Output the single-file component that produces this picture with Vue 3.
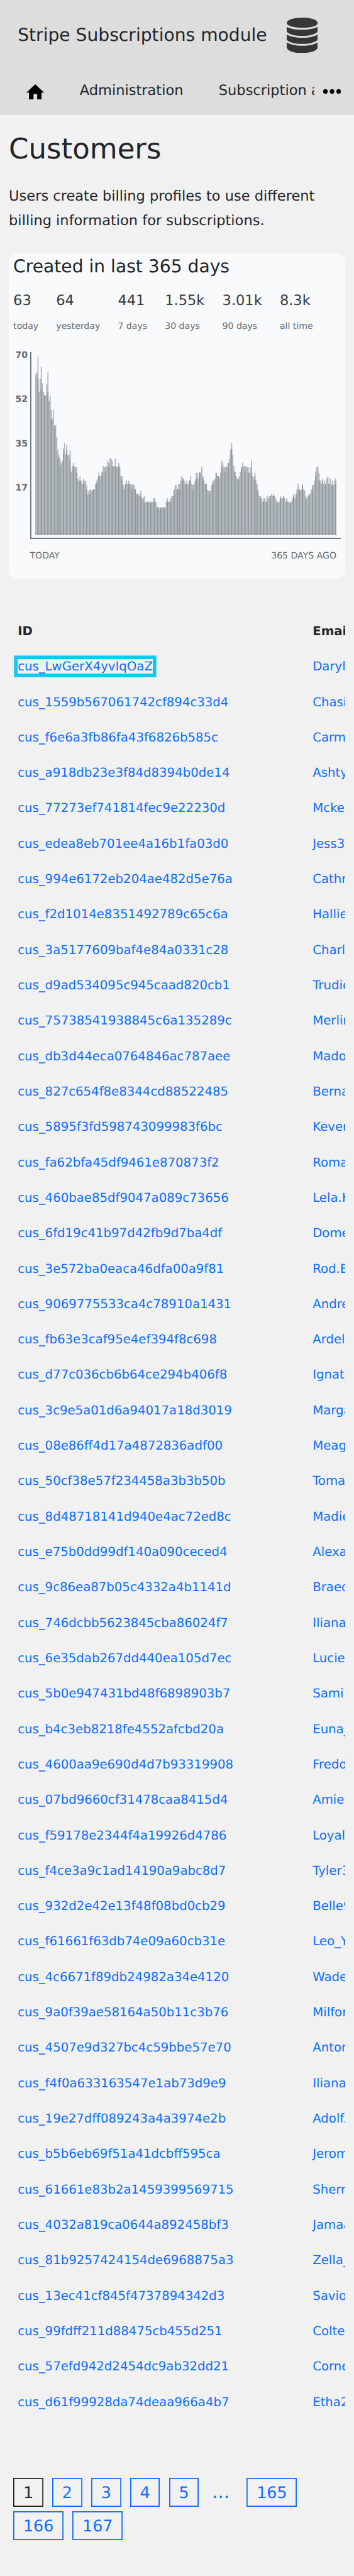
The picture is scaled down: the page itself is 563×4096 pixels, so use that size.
<script setup>
const stats = [
  { value: '63', label: 'today' },
  { value: '64', label: 'yesterday' },
  { value: '441', label: '7 days' },
  { value: '1.55k', label: '30 days' },
  { value: '3.01k', label: '90 days' },
  { value: '8.3k', label: 'all time' },
]

const ticks = ['70', '52', '35', '17']

// Distance of each column's top from the top of the plot; the columns stand on BASE.
const BASE = 165
const tops = [
  20, 18, 4, 36, 24, 13, 28, 36, 39, 39, 29, 18, 44, 39, 52, 60, 52, 66, 66, 77, 88, 93, 96, 100, 98, 87, 82, 92, 84, 93, 93, 88,
  108, 103, 100, 103, 104, 104, 114, 116, 112, 116, 119, 114, 116, 116, 120, 128, 125, 124, 125, 125, 124, 124, 119, 116, 114, 109,
  112, 112, 108, 103, 104, 104, 103, 98, 100, 96, 96, 98, 103, 103, 96, 104, 104, 100, 104, 112, 112, 120, 124, 119, 116, 119, 116,
  119, 119, 120, 119, 120, 124, 128, 128, 130, 128, 125, 132, 132, 130, 136, 135, 135, 135, 136, 135, 136, 135, 132, 135, 136, 140,
  140, 141, 140, 140, 140, 140, 140, 135, 132, 135, 135, 132, 130, 130, 124, 120, 120,
  124, 119, 119, 116, 112, 114, 116, 119, 116, 119, 119, 116, 112, 119, 120, 119, 116, 109, 109, 114, 108, 109, 104, 112, 116, 119,
  119, 124, 125, 125, 125, 120, 116, 116, 114, 109, 112, 112, 114, 109, 98, 100, 104, 104, 103, 104, 100, 96, 88, 82, 93, 103, 108,
  112, 114, 114, 112, 108, 104, 100, 103, 103, 103, 104, 104, 109, 104, 98, 112, 114, 109, 116, 119, 125, 130, 130, 132, 135, 132,
  132, 135, 130, 132, 130, 130, 128, 130, 128, 130, 132, 135, 136, 135, 130, 132, 132, 130, 132, 135, 132, 135, 136, 136, 135, 132,
  128, 132, 128, 124, 119, 124, 125, 124, 120, 124, 125, 130, 132, 130, 128, 128, 124, 120, 120, 116, 108, 104, 103, 109, 116, 119,
  114, 119, 116, 119, 114, 112, 119, 114, 120, 116, 120, 116, 114,
]

// Columns where two neighbouring bars overlap: [column, top].
const overlaps = [
  [2, 24], [5, 34], [8, 39], [11, 36], [14, 61], [17, 68], [20, 96], [22, 103], [25, 92], [28, 88], [31, 98], [34, 104], [37, 109],
  [40, 116], [43, 119], [46, 124], [49, 128], [52, 124], [55, 119], [57, 112], [60, 109], [63, 108], [66, 104], [69, 103], [72, 103],
  [75, 103], [78, 116], [81, 119], [84, 119], [87, 124], [90, 124], [92, 128], [95, 130], [98, 135], [101, 136], [104, 136],
  [107, 132], [110, 140], [113, 141], [116, 141], [119, 135], [122, 135], [125, 125], [128, 124], [130, 124], [133, 114], [136, 119],
  [139, 116], [142, 124], [145, 114], [148, 109], [151, 114], [154, 119], [157, 128], [160, 119], [163, 109], [165, 112], [168, 104],
  [171, 109], [174, 100], [177, 87], [180, 108], [183, 116], [186, 104], [189, 108], [192, 109], [195, 108], [198, 112], [200, 124],
  [203, 132], [206, 135], [209, 135], [212, 132], [215, 130], [218, 136], [221, 132], [224, 130], [227, 135], [230, 136], [233, 130],
  [236, 128], [238, 124], [241, 120], [244, 132], [247, 130], [250, 124], [253, 112], [256, 116], [259, 116], [262, 119], [265, 119],
  [268, 119], [271, 119],
]

const barPath = tops.map((t, i) => `${i ? 'L' : `M0 ${BASE}L`}${i} ${t}H${i + 1}`).join('') + `V${BASE}Z`
const overlapPath = overlaps.map(([x, t]) => `M${x} ${t}h1V${BASE}h-1Z`).join('')
const overlapFoot = overlaps.map(([x]) => `M${x} ${BASE - 1}h1v1h-1Z`).join('')

const customers = [
  ['cus_LwGerX4yvIqOaZ', 'Daryl'],
  ['cus_1559b567061742cf894c33d4', 'Chasi'],
  ['cus_f6e6a3fb86fa43f6826b585c', 'Carm'],
  ['cus_a918db23e3f84d8394b0de14', 'Ashty'],
  ['cus_77273ef741814fec9e22230d', 'Mcke'],
  ['cus_edea8eb701ee4a16b1fa03d0', 'Jess3'],
  ['cus_994e6172eb204ae482d5e76a', 'Cathr'],
  ['cus_f2d1014e8351492789c65c6a', 'Hallie'],
  ['cus_3a5177609baf4e84a0331c28', 'Charl'],
  ['cus_d9ad534095c945caad820cb1', 'Trudie'],
  ['cus_75738541938845c6a135289c', 'Merlin'],
  ['cus_db3d44eca0764846ac787aee', 'Mado'],
  ['cus_827c654f8e8344cd88522485', 'Berna'],
  ['cus_5895f3fd598743099983f6bc', 'Kever'],
  ['cus_fa62bfa45df9461e870873f2', 'Roma'],
  ['cus_460bae85df9047a089c73656', 'Lela.K'],
  ['cus_6fd19c41b97d42fb9d7ba4df', 'Dome'],
  ['cus_3e572ba0eaca46dfa00a9f81', 'Rod.E'],
  ['cus_9069775533ca4c78910a1431', 'Andre'],
  ['cus_fb63e3caf95e4ef394f8c698', 'Ardel'],
  ['cus_d77c036cb6b64ce294b406f8', 'Ignat'],
  ['cus_3c9e5a01d6a94017a18d3019', 'Marga'],
  ['cus_08e86ff4d17a4872836adf00', 'Meag'],
  ['cus_50cf38e57f234458a3b3b50b', 'Toma'],
  ['cus_8d48718141d940e4ac72ed8c', 'Madie'],
  ['cus_e75b0dd99df140a090ceced4', 'Alexa'],
  ['cus_9c86ea87b05c4332a4b1141d', 'Braed'],
  ['cus_746dcbb5623845cba86024f7', 'Iliana'],
  ['cus_6e35dab267dd440ea105d7ec', 'Lucie'],
  ['cus_5b0e947431bd48f6898903b7', 'Sami'],
  ['cus_b4c3eb8218fe4552afcbd20a', 'Euna_'],
  ['cus_4600aa9e690d4d7b93319908', 'Fredd'],
  ['cus_07bd9660cf31478caa8415d4', 'Amie'],
  ['cus_f59178e2344f4a19926d4786', 'Loyal'],
  ['cus_f4ce3a9c1ad14190a9abc8d7', 'Tyler3'],
  ['cus_932d2e42e13f48f08bd0cb29', 'Belle9'],
  ['cus_f61661f63db74e09a60cb31e', 'Leo_Y'],
  ['cus_4c6671f89db24982a34e4120', 'Wade'],
  ['cus_9a0f39ae58164a50b11c3b76', 'Milfor'],
  ['cus_4507e9d327bc4c59bbe57e70', 'Anton'],
  ['cus_f4f0a633163547e1ab73d9e9', 'Iliana'],
  ['cus_19e27dff089243a4a3974e2b', 'Adolf.'],
  ['cus_b5b6eb69f51a41dcbff595ca', 'Jerom'],
  ['cus_61661e83b2a1459399569715', 'Sherr'],
  ['cus_4032a819ca0644a892458bf3', 'Jamaa'],
  ['cus_81b9257424154de6968875a3', 'Zella_'],
  ['cus_13ec41cf845f4737894342d3', 'Savio'],
  ['cus_99fdff211d88475cb455d251', 'Colte'],
  ['cus_57efd942d2454dc9ab32dd21', 'Corne'],
  ['cus_d61f99928da74deaa966a4b7', 'Etha2'],
]

const pages = ['1', '2', '3', '4', '5', '…', '165', '166', '167']
</script>

<template>
  <div class="page">
    <header class="header">
      <div class="brand">
        <span class="brand-title">Stripe Subscriptions module</span>
        <svg class="brand-icon" viewBox="0 0 56 64">
          <path d="M0 10C0 4 12 0 28 0S56 4 56 10C56 14.5 44 18.3 28 18.3S0 14.5 0 10Z" />
          <path d="M0 16.7C6 20 16 22 28 22S50 20 56 16.7V25.5C51 30.5 41 33 28 33S5 30.5 0 25.5Z" />
          <path d="M0 30.7C6 34 16 36.5 28 36.5S50 34 56 30.7V40C51 45 41 47.5 28 47.5S5 45 0 40Z" />
          <path d="M0 45C6 48.5 16 51 28 51S50 48.5 56 45V53C56 60 43 64 28 64S0 60 0 53Z" />
        </svg>
      </div>
      <nav class="nav">
        <div class="nav-items">
          <svg class="home" viewBox="0 0 32 28">
            <path d="M16 0L32 15H27.3V28H19.5V17.5H12.8V28H4.7V15H0Z" />
          </svg>
          <span class="nav-link">Administration</span>
          <span class="nav-link">Subscription ad</span>
        </div>
        <svg class="more" viewBox="0 0 32 10">
          <circle cx="4" cy="5" r="4.1" />
          <circle cx="16" cy="5" r="4.1" />
          <circle cx="28" cy="5" r="4.1" />
        </svg>
      </nav>
    </header>

    <main class="main">
      <h1>Customers</h1>
      <p class="intro">Users create billing profiles to use different billing information for subscriptions.</p>

      <section class="card">
        <h2>Created in last 365 days</h2>
        <ul class="stats">
          <li v-for="s in stats" :key="s.label">
            <span class="stat-value">{{ s.value }}</span>
            <span class="stat-label">{{ s.label }}</span>
          </li>
        </ul>
        <div class="chart">
          <div class="ticks">
            <span v-for="t in ticks" :key="t">{{ t }}</span>
          </div>
          <div class="plot">
            <svg class="bars" viewBox="0 0 272 165" preserveAspectRatio="none">
              <path class="bar" :d="barPath" />
              <path class="bar-overlap" :d="overlapPath" />
              <rect class="foot" x="0" :y="BASE - 1" width="272" height="1" />
              <path class="foot-overlap" :d="overlapFoot" />
            </svg>
          </div>
        </div>
        <div class="range"><span>TODAY</span><span>365 DAYS AGO</span></div>
      </section>

      <div class="table">
        <div class="row head"><span>ID</span><span>Email</span></div>
        <div v-for="(c, i) in customers" :key="c[0]" class="row">
          <span><a :class="{ focused: i === 0 }">{{ c[0] }}</a></span>
          <span><a>{{ c[1] }}</a></span>
        </div>
      </div>

      <div class="pagination">
        <span
          v-for="(p, i) in pages"
          :key="p"
          :class="p === '…' ? 'ellipsis' : ['page-link', { current: i === 0 }]"
        >{{ p }}</span>
      </div>
    </main>
  </div>
</template>

<style>
html {
  font-size: 8.8px;
  background: #f1f1f1;
  overflow-x: hidden;
}
</style>

<style scoped>
.page {
  width: 64rem;
  height: 465.4rem;
  overflow: hidden;
  background: #f1f1f1;
  color: #212529;
  font-family: "DejaVu Sans", sans-serif;
  text-rendering: geometricPrecision;
}
.header {
  height: 20.8rem;
  background: #ddd;
}
.brand {
  display: flex;
  align-items: center;
  height: 12.8rem;
  padding-left: 3.2rem;
}
.brand-title {
  flex: none;
  width: 48.6rem;
  margin-top: -0.1rem;
  font-size: 3.2rem;
  line-height: 4.8rem;
  white-space: nowrap;
}
.brand-icon {
  width: 5.6rem;
  height: 6.4rem;
  fill: #363636;
}
.nav {
  display: flex;
  align-items: center;
  height: 7.2rem;
}
.nav-items {
  display: flex;
  align-items: center;
  gap: 6.4rem;
  width: 56.8rem;
  padding-left: 4.8rem;
  box-sizing: border-box;
  overflow: hidden;
  font-size: 2.56rem;
  line-height: 4rem;
  white-space: nowrap;
}
.home {
  flex: none;
  width: 3.2rem;
  height: 2.8rem;
  margin-top: 0.4rem;
}
.more {
  width: 3.2rem;
  height: 1rem;
  margin: 0.3rem 0 0 1.6rem;
}
.main {
  padding: 0 1.6rem;
}
h1 {
  margin: 0;
  padding-top: 3.1rem;
  font-size: 5.12rem;
  font-weight: 400;
  line-height: 6.2rem;
}
.intro {
  margin: 3.25rem 0 0;
  font-size: 2.56rem;
  line-height: 4.4rem;
}
.card {
  height: 58.8rem;
  margin-top: 3.65rem;
  padding: 0 0.8rem;
  box-sizing: border-box;
  border-radius: 1.6rem;
  background: #f8fafc;
}
h2 {
  margin: 0;
  padding-top: 0.3rem;
  font-size: 3.2rem;
  font-weight: 400;
  line-height: 4rem;
}
.stats {
  display: flex;
  gap: 3.2rem;
  margin: 2.3rem 0 0;
  padding: 0;
  list-style: none;
}
.stats li {
  display: flex;
  flex-direction: column;
}
.stat-value {
  color: #343a40;
  font-size: 2.56rem;
  line-height: 4rem;
}
.stat-label {
  margin-top: 1.3rem;
  color: #666b6f;
  font-size: 1.6rem;
  line-height: 2.5rem;
}
.chart {
  display: flex;
  justify-content: space-between;
  margin-top: 3.4rem;
}
.ticks {
  width: 2.6rem;
  margin-top: -0.3rem;
  color: #666b6f;
  font-size: 1.6rem;
  font-weight: 700;
  text-align: right;
}
.ticks span {
  display: block;
  height: 8rem;
  line-height: 2rem;
}
.plot {
  width: 56.2rem;
  height: 33.8rem;
  padding: 0 1rem;
  box-sizing: border-box;
  box-shadow: inset 0.2rem -0.2rem 0 #6c757d;
}
.bars {
  display: block;
  width: 54.4rem;
  height: 33rem;
}
.bar {
  fill: #b0b6ba;
}
.bar-overlap {
  fill: #8f979c;
}
.foot {
  fill: #8f9194;
}
.foot-overlap {
  fill: #696c70;
}
.range {
  display: flex;
  justify-content: space-between;
  margin: 1.85rem 0 0 3rem;
  padding-right: 0.8rem;
  color: #666b6f;
  font-size: 1.6rem;
  line-height: 2.5rem;
}
.table {
  margin-top: 6.3rem;
  overflow: hidden;
  font-size: 2.24rem;
}
.row {
  display: grid;
  grid-template-columns: 53.3rem 20rem;
  height: 6.4rem;
  line-height: 6.4rem;
  white-space: nowrap;
}
.row span {
  padding-left: 1.6rem;
}
.head {
  font-weight: 700;
}
.row a {
  color: #0d6efd;
}
.row a.focused {
  box-shadow: 0 0 0 0.64rem #0dcaf0;
}
.pagination {
  display: flex;
  flex-wrap: wrap;
  gap: 0.8rem 1.6rem;
  margin-top: 10.5rem;
  padding-left: 0.8rem;
  font-size: 2.88rem;
  line-height: 4.8rem;
}
.page-link {
  padding: 0.2rem 1.8rem;
  box-shadow: inset 0 0 0 0.2rem #0d6efd;
  color: #0d6efd;
}
.page-link.current {
  box-shadow: inset 0 0 0 0.2rem #212529;
  color: #212529;
}
.ellipsis {
  box-sizing: border-box;
  width: 5.44rem;
  padding: 0.2rem 0 0 0.75rem;
  color: #0d6efd;
  font-size: 3.2rem;
}
</style>
